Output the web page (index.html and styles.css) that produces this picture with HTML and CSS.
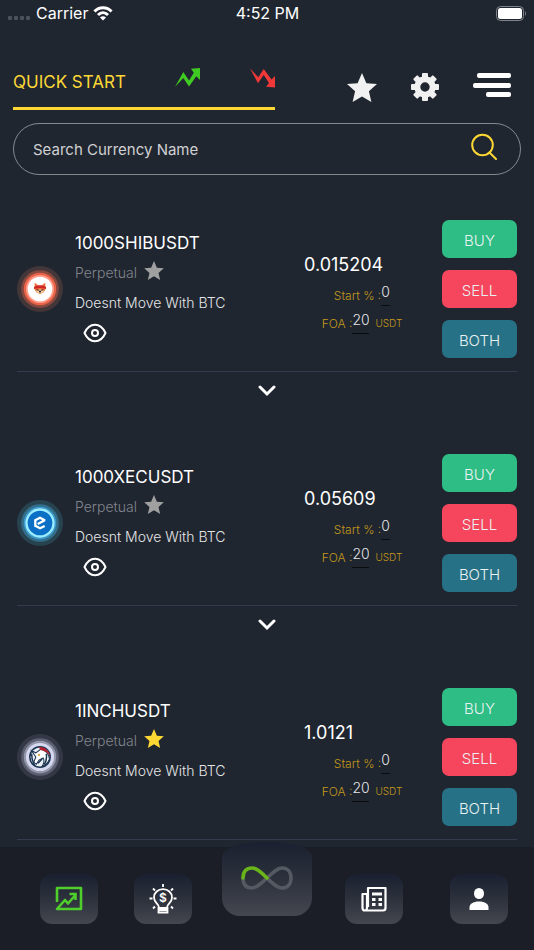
FILE: index.html
```html
<!DOCTYPE html>
<html lang="en">
<head>
    <meta charset="UTF-8">
    <meta name="viewport" content="width=device-width, initial-scale=1.0">
    <title>Quick Start</title>
    <link rel="stylesheet" href="styles.css">
</head>
<body>
    <!-- Shared icons -->
    <svg class="sprite" aria-hidden="true">
        <symbol id="star" viewBox="0 0 30 29">
            <path d="M15 0 L19.4 10.2 L30 11.1 L21.9 18.3 L24.4 29 L15 23.4 L5.6 29 L8.1 18.3 L0 11.1 L10.6 10.2 Z" fill="currentColor"/>
        </symbol>
        <symbol id="eye" viewBox="0 0 24 20">
            <path d="M1.5 10 C6.5 -1 17.5 -1 22.5 10 C17.5 21 6.5 21 1.5 10 Z" fill="none" stroke="currentColor" stroke-width="2" stroke-linejoin="round"/>
            <circle cx="12" cy="10" r="3" fill="none" stroke="currentColor" stroke-width="2"/>
        </symbol>
        <symbol id="chevron" viewBox="0 0 18 12">
            <path d="M2 2 L9 9 L16 2" fill="none" stroke="currentColor" stroke-width="3" stroke-linecap="round"/>
        </symbol>
    </svg>

    <div class="status-bar">
        <div class="carrier">
            <svg width="23" height="16" viewBox="0 0 23 16" fill="#4d5159">
                <rect x="0" y="11" width="4" height="4" rx="1"/>
                <rect x="6" y="11" width="4" height="4" rx="1"/>
                <rect x="12" y="11" width="4" height="4" rx="1"/>
                <rect x="18" y="11" width="4" height="4" rx="1"/>
            </svg>
            <span>Carrier</span>
            <svg width="20" height="15" viewBox="0 0 20 15" fill="none" stroke="#fff" stroke-width="3">
                <path d="M1.5 5.5 C6 0.5 14 0.5 18.5 5.5"/>
                <path d="M5 9 C8 6 12 6 15 9"/>
                <path d="M7 11.5 Q10 9.2 13 11.5 L10 14.5 Z" fill="#fff" stroke="none"/>
            </svg>
        </div>
        <div class="time">4:52 PM</div>
        <div class="battery">
            <svg width="31" height="15" viewBox="0 0 31 15">
                <rect x="0.5" y="0.5" width="27" height="14" rx="4" fill="none" stroke="#80848a"/>
                <rect x="2" y="2" width="24" height="11" rx="2.5" fill="#fff"/>
                <path d="M29 5 Q31 7.5 29 10 Z" fill="#80848a"/>
            </svg>
        </div>
    </div>

    <header class="header">
        <nav class="tabs">
            <button class="tab">QUICK START</button>
            <button class="tab" aria-label="Rising">
                <svg width="25" height="28" viewBox="0 0 25 28" fill="#3fcb21">
                    <path d="M0 19 L8.3 4 L14 12.6 L18.8 4.8 L16 0.8 L25 0 L25 12 L21.3 8.2 L14 18.6 L8.3 10 Z"/>
                </svg>
            </button>
            <button class="tab" aria-label="Falling">
                <svg width="25" height="28" viewBox="0 0 25 28" fill="#f03838">
                    <path d="M0 0.5 L8.3 9.3 L13.7 1 L21.5 11.4 L25 8 L25 19.5 L16 18.8 L19 15 L13.7 7 L8 15.2 Z"/>
                </svg>
            </button>
        </nav>
        <div class="actions">
            <button class="icon-button" aria-label="Favourites"><svg width="30" height="29"><use href="#star"/></svg></button>
            <button class="icon-button" aria-label="Settings">
                <svg width="28" height="28" viewBox="-14 -14 28 28" fill="currentColor">
                    <circle r="7.7" fill="none" stroke="currentColor" stroke-width="6"/>
                    <rect x="-3" y="-14" width="6" height="6" rx="1"/>
                    <rect x="-3" y="-14" width="6" height="6" rx="1" transform="rotate(45)"/>
                    <rect x="-3" y="-14" width="6" height="6" rx="1" transform="rotate(90)"/>
                    <rect x="-3" y="-14" width="6" height="6" rx="1" transform="rotate(135)"/>
                    <rect x="-3" y="-14" width="6" height="6" rx="1" transform="rotate(180)"/>
                    <rect x="-3" y="-14" width="6" height="6" rx="1" transform="rotate(225)"/>
                    <rect x="-3" y="-14" width="6" height="6" rx="1" transform="rotate(270)"/>
                    <rect x="-3" y="-14" width="6" height="6" rx="1" transform="rotate(315)"/>
                </svg>
            </button>
            <button class="icon-button" aria-label="Menu">
                <svg width="38" height="30" viewBox="0 0 38 30" fill="#fff">
                    <rect x="4" y="1" width="34" height="5" rx="2"/>
                    <rect x="0" y="11" width="38" height="5" rx="2"/>
                    <rect x="13" y="20" width="25" height="5" rx="2"/>
                </svg>
            </button>
        </div>
    </header>

    <form class="search">
        <input type="text" placeholder="Search Currency Name" aria-label="Search Currency Name">
        <button class="search-button" type="button" aria-label="Search">
            <svg width="26" height="28" viewBox="0 0 26 28" fill="none" stroke="#fdd835" stroke-width="2" stroke-linecap="round">
                <circle cx="11.5" cy="12" r="10.3"/>
                <path d="M18.5 19.5 L25 26"/>
            </svg>
        </button>
    </form>

    <main>
        <section class="pair">
            <div class="pair-body">
                <svg class="coin" viewBox="-22 -22 44 44">
                    <circle r="22" fill="#433638"/>
                    <circle r="18" fill="#87483f"/>
                    <circle r="15.5" fill="#e96248"/>
                    <circle r="13.5" fill="#ff9b86"/>
                    <circle r="11.8" fill="#fff"/>
                    <path d="M-5 -6 L-1.8 -3.5 L1.8 -3.5 L5 -6 L5.3 0 L3.5 3 L0 5 L-3.5 3 L-5.3 0 Z" fill="#ee6a35"/>
                    <path d="M-5.8 -2 Q0 -4.5 5.8 -2 L5.5 0 Q0 -2 -5.5 0 Z" fill="#cf2525"/>
                    <path d="M-4 1.5 L0 0.2 L4 1.5 L2.8 3.4 L0 4.6 L-2.8 3.4 Z" fill="#f6d3a6"/>
                    <path d="M-3.2 0.6 L-1.2 1.2 M3.2 0.6 L1.2 1.2" stroke="#3b1a16" stroke-width="1"/>
                    <circle cy="2.5" r="1" fill="#222"/>
                </svg>
                <div class="info">
                    <div class="name">1000SHIBUSDT</div>
                    <div class="kind">Perpetual <button class="fav" aria-label="Favourite"><svg width="20" height="19"><use href="#star"/></svg></button></div>
                    <div class="note">Doesnt Move With BTC</div>
                    <button class="watch" aria-label="Watch"><svg width="24" height="20"><use href="#eye"/></svg></button>
                </div>
                <div class="price">
                    <div class="value">0.015204</div>
                    <div class="field">
                        <label for="start1">Start % :</label><input class="short" id="start1" type="text" value="0">
                    </div>
                    <div class="field">
                        <label for="foa1">FOA :</label><input id="foa1" type="text" value="20"><span class="unit">USDT</span>
                    </div>
                </div>
                <div class="orders">
                    <button class="buy">BUY</button>
                    <button class="sell">SELL</button>
                    <button class="both">BOTH</button>
                </div>
            </div>
            <button class="expand" aria-label="Show more"><svg width="18" height="12"><use href="#chevron"/></svg></button>
        </section>

        <section class="pair">
            <div class="pair-body">
                <svg class="coin" viewBox="-22 -22 44 44">
                    <circle r="22" fill="#284350"/>
                    <circle r="18" fill="#336f8c"/>
                    <circle r="15.5" fill="#3d9ccb"/>
                    <circle r="14" fill="#9ceeff"/>
                    <circle r="11.8" fill="#0b6fc6"/>
                    <path d="M-2.2 1 L4 -2.3 L4 -3 L0 -5 L-4.5 -2.7 L-4.5 2.7 L0 5 L4.5 2.8" fill="none" stroke="#fff" stroke-width="2.2"/>
                </svg>
                <div class="info">
                    <div class="name">1000XECUSDT</div>
                    <div class="kind">Perpetual <button class="fav" aria-label="Favourite"><svg width="20" height="19"><use href="#star"/></svg></button></div>
                    <div class="note">Doesnt Move With BTC</div>
                    <button class="watch" aria-label="Watch"><svg width="24" height="20"><use href="#eye"/></svg></button>
                </div>
                <div class="price">
                    <div class="value">0.05609</div>
                    <div class="field">
                        <label for="start2">Start % :</label><input class="short" id="start2" type="text" value="0">
                    </div>
                    <div class="field">
                        <label for="foa2">FOA :</label><input id="foa2" type="text" value="20"><span class="unit">USDT</span>
                    </div>
                </div>
                <div class="orders">
                    <button class="buy">BUY</button>
                    <button class="sell">SELL</button>
                    <button class="both">BOTH</button>
                </div>
            </div>
            <button class="expand" aria-label="Show more"><svg width="18" height="12"><use href="#chevron"/></svg></button>
        </section>

        <section class="pair">
            <div class="pair-body">
                <svg class="coin" viewBox="-22 -22 44 44">
                    <circle r="22" fill="#343846"/>
                    <circle r="18" fill="#5b5f70"/>
                    <circle r="15.5" fill="#9296aa"/>
                    <circle r="13.5" fill="#d5d8ee"/>
                    <circle r="10.5" fill="#1b3450"/>
                    <circle r="9" fill="#e9eef5"/>
                    <path d="M-8 -6 L-4 -4 L1 -7.5 Q8 -6 9 2 Q7 7 2 9 Q5 4 3 1 L-1 3 L-3.5 7 L-6 5 L-4 0 Z" fill="#fff" stroke="#1b3450" stroke-width="1"/>
                    <path d="M-1 -9.5 Q7 -10 10 -1 Q7 -5 3 -6 L0 -7 Z" fill="#b5202f"/>
                    <path d="M-8 -3 Q-8 4 -5 8 M6 -3 Q7 3 4 7 M-2 6 L2 2" fill="none" stroke="#1b3450" stroke-width="1.4"/>
                    <circle cx="-1" cy="-2" r="1" fill="#d4a52a"/>
                </svg>
                <div class="info">
                    <div class="name">1INCHUSDT</div>
                    <div class="kind">Perpetual <button class="fav active" aria-label="Favourite"><svg width="20" height="19"><use href="#star"/></svg></button></div>
                    <div class="note">Doesnt Move With BTC</div>
                    <button class="watch" aria-label="Watch"><svg width="24" height="20"><use href="#eye"/></svg></button>
                </div>
                <div class="price">
                    <div class="value">1.0121</div>
                    <div class="field">
                        <label for="start3">Start % :</label><input class="short" id="start3" type="text" value="0">
                    </div>
                    <div class="field">
                        <label for="foa3">FOA :</label><input id="foa3" type="text" value="20"><span class="unit">USDT</span>
                    </div>
                </div>
                <div class="orders">
                    <button class="buy">BUY</button>
                    <button class="sell">SELL</button>
                    <button class="both">BOTH</button>
                </div>
            </div>
        </section>
    </main>

    <nav class="bottom-nav">
        <button class="nav-item" aria-label="Markets">
            <svg width="28" height="26" viewBox="0 0 28 26" fill="none" stroke="#4fce2c" stroke-width="2.6" stroke-linejoin="round">
                <path d="M2 16 L2 2 L26 2 L26 23 L2 23 L10 14 L13 17.5 L20 9.5"/>
                <path d="M14.5 8 L20.5 8 L20.5 14" stroke-linejoin="miter"/>
            </svg>
        </button>
        <button class="nav-item" aria-label="Ideas">
            <svg width="28" height="30" viewBox="0 0 28 30" fill="none" stroke="#fff" stroke-width="1.8">
                <path d="M10 23.5 C10 20 5 19 5 13.5 C5 8.5 9 5.2 14 5.2 C19 5.2 23 8.5 23 13.5 C23 19 18 20 18 23.5"/>
                <path d="M9.5 24 H18.5 V28.5 H9.5 Z M9.5 26 H18.5"/>
                <path d="M14 0 V3 M0.5 14.5 H3.5 M24.5 14.5 H27.5 M4 4.5 L6 6.5 M24 4.5 L22 6.5 M4 24.5 L6 22.5 M24 24.5 L22 22.5"/>
                <text class="dollar" x="14" y="18" text-anchor="middle">$</text>
            </svg>
        </button>
        <button class="nav-item nav-main" aria-label="Auto trade">
            <svg width="52" height="28" viewBox="0 0 52 28" fill="none" stroke-width="3.6">
                <path d="M2 13 C2 20 5.5 23 11 23 C20 23 32 3 41 3 C46.5 3 50 7 50 13 C50 19 46.5 23 41 23 C36 23 31 18 26 13" stroke="#555962"/>
                <path d="M2 13 C2 6 5.5 3 11 3 C16 3 21 8 26 13" stroke="#6ab41c" stroke-linecap="round"/>
            </svg>
        </button>
        <button class="nav-item" aria-label="News">
            <svg width="26" height="26" viewBox="0 0 26 26" fill="none" stroke="#fff" stroke-width="2.2" stroke-linejoin="round">
                <path d="M7 21 V2 H24.5 V22 Q24.5 24.5 22 24.5 H4 Q1.5 24.5 1.5 22 V8 H6 V22 Q6 24 4.5 24.5"/>
                <path d="M11 8 H21" stroke-width="3"/>
                <path d="M11 13.5 H14.5 M17.5 13.5 H21 M11 18.5 H14.5 M17.5 18.5 H21" stroke-width="2.8"/>
            </svg>
        </button>
        <button class="nav-item" aria-label="Profile">
            <svg width="20" height="22" viewBox="0 0 20 22" fill="#fff">
                <ellipse cx="10" cy="5.5" rx="5" ry="5.5"/>
                <path d="M0.5 22 V19.5 C0.5 16 4 13.5 10 13.5 C16 13.5 19.5 16 19.5 19.5 V22 Z"/>
            </svg>
        </button>
    </nav>
</body>
</html>
```

FILE: styles.css
```css
* {
    box-sizing: border-box;
}

body {
    margin: 0;
    min-height: 100vh;
    background-color: #202630;
    color: white;
    font-family: Inter, "Liberation Sans", sans-serif;
    font-weight: 300;
}

button {
    padding: 0;
    border: none;
    background: none;
    color: inherit;
    font: inherit;
    cursor: pointer;
}

input {
    padding: 0;
    border: none;
    background: none;
    color: inherit;
    font: inherit;
    outline: none;
}

svg {
    display: block;
}

.sprite {
    display: none;
}

/* Status bar */
.status-bar {
    display: grid;
    grid-template-columns: 1fr auto 1fr;
    align-items: center;
    height: 26px;
    padding: 0 7px 0 8px;
    font-size: 16px;
    font-weight: 400;
}

.carrier {
    display: flex;
    align-items: center;
    gap: 5px;
}

.battery {
    justify-self: end;
}

/* Header */
.header {
    display: flex;
    justify-content: space-between;
    align-items: flex-end;
    padding: 30px 23px 0 13px;
}

.tabs {
    display: flex;
    justify-content: space-between;
    align-items: center;
    width: 262px;
    height: 54px;
    border-bottom: 3px solid #fdd835;
    color: #fdd835;
    font-size: 17px;
    font-weight: 400;
}

.actions {
    display: flex;
    align-items: center;
    gap: 34px;
    padding-bottom: 8px;
    color: #f1f1f1;
}

/* Search */
.search {
    display: flex;
    align-items: center;
    height: 52px;
    margin: 13px 13px 0;
    padding: 0 23px 0 19px;
    border: 1px solid #85888d;
    border-radius: 26px;
}

.search input {
    flex: 1;
    min-width: 0;
    font-size: 15px;
    font-weight: 400;
}

.search input::placeholder {
    color: #d0d1d3;
    opacity: 1;
}

.search-button {
    padding-bottom: 4px;
}

/* Currency pairs */
.pair {
    padding: 45px 17px 0;
}

.pair-body {
    display: grid;
    grid-template-columns: 58px 1fr 116px 97px;
    align-items: center;
    padding-bottom: 13px;
    border-bottom: 1px solid #333c4e;
}

.coin {
    width: 46px;
    height: 46px;
}

.info {
    padding-bottom: 3px;
    line-height: 30px;
}

.name {
    font-size: 17px;
    font-weight: 400;
}

.kind {
    display: flex;
    align-items: center;
    gap: 7px;
    color: #80858d;
    font-size: 14px;
}

.fav {
    padding-bottom: 4px;
    color: #a0a0a0;
}

.fav.active {
    color: #fdd835;
}

.note {
    color: #e4e5e7;
    font-size: 14px;
}

.watch {
    display: flex;
    align-items: center;
    height: 30px;
    margin-left: 8px;
}

.price {
    padding-top: 8px;
}

.value {
    font-size: 18px;
    font-weight: 400;
    line-height: 32px;
}

.field {
    display: flex;
    align-items: center;
    justify-content: center;
    height: 28px;
    color: #c49a1a;
    font-size: 12px;
}

.field input {
    width: 17px;
    height: 22px;
    padding-bottom: 6px;
    border-bottom: 1px solid #0a0c10;
    color: #e4e5e7;
    font-size: 14px;
}

.field .short {
    width: 9px;
}

.unit {
    margin-left: 6px;
    font-size: 10px;
}

.orders {
    display: flex;
    flex-direction: column;
    gap: 12px;
    padding-left: 22px;
}

.orders button {
    height: 38px;
    padding-top: 2px;
    border-radius: 7px;
    color: #e9f2f2;
    font-size: 15px;
}

.buy {
    background-color: #2ebd85;
}

.sell {
    background-color: #f6465d;
}

.both {
    background-color: #277186;
}

.expand {
    display: flex;
    justify-content: center;
    width: 100%;
    padding: 13px 0 12px;
}

/* Bottom navigation */
.bottom-nav {
    position: fixed;
    left: 0;
    right: 0;
    bottom: 0;
    display: grid;
    grid-template-columns: 94fr 94fr 114fr 100fr 110fr;
    align-items: center;
    justify-items: center;
    height: 103px;
    padding-left: 22px;
    background-color: #1b1e26;
}

.nav-item {
    display: flex;
    align-items: center;
    justify-content: center;
    width: 58px;
    height: 50px;
    border-radius: 12px;
    background: linear-gradient(#1a2030, #2c313c 50%, #454750);
}

.nav-main {
    align-self: start;
    width: 90px;
    height: 74px;
    margin-top: -5px;
    border-radius: 45px 45px 18px 18px / 14px 14px 18px 18px;
}

.dollar {
    fill: white;
    stroke: none;
    font-size: 12px;
    font-weight: 600;
}
```
